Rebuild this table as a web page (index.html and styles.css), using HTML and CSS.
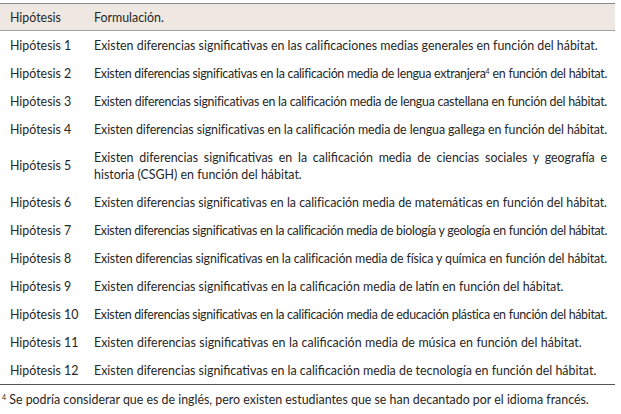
FILE: index.html
```
<!DOCTYPE html>
<html lang="es">
<head>
<meta charset="utf-8">
<link rel="stylesheet" href="styles.css">
</head>
<body>
<table class="hyp">
<colgroup><col class="k1"><col class="k2"></colgroup>
<thead>
<tr><th class="c1">Hipótesis</th><th class="c2">Formulación.</th></tr>
</thead>
<tbody>
<tr><td class="c1">Hipótesis 1</td><td class="c2">Existen diferencias significativas en las calificaciones medias generales en función del hábitat.</td></tr>
<tr><td class="c1">Hipótesis 2</td><td class="c2 fit s30">Existen diferencias significativas en la calificación media de lengua extranjera<sup>4</sup> en función del hábitat.</td></tr>
<tr><td class="c1">Hipótesis 3</td><td class="c2 fit s25">Existen diferencias significativas en la calificación media de lengua castellana en función del hábitat.</td></tr>
<tr><td class="c1">Hipótesis 4</td><td class="c2 fit s10">Existen diferencias significativas en la calificación media de lengua gallega en función del hábitat.</td></tr>
<tr class="two"><td class="c1">Hipótesis 5</td><td class="c2 just">Existen diferencias significativas en la calificación media de ciencias sociales y geografía e historia (CSGH) en función del hábitat.</td></tr>
<tr><td class="c1">Hipótesis 6</td><td class="c2 fit s02">Existen diferencias significativas en la calificación media de matemáticas en función del hábitat.</td></tr>
<tr><td class="c1">Hipótesis 7</td><td class="c2 fit s30">Existen diferencias significativas en la calificación media de biología y geología en función del hábitat.</td></tr>
<tr><td class="c1">Hipótesis 8</td><td class="c2 fit s15">Existen diferencias significativas en la calificación media de física y química en función del hábitat.</td></tr>
<tr><td class="c1">Hipótesis 9</td><td class="c2">Existen diferencias significativas en la calificación media de latín en función del hábitat.</td></tr>
<tr><td class="c1">Hipótesis 10</td><td class="c2 fit s30">Existen diferencias significativas en la calificación media de educación plástica en función del hábitat.</td></tr>
<tr><td class="c1">Hipótesis 11</td><td class="c2 w10">Existen diferencias significativas en la calificación media de música en función del hábitat.</td></tr>
<tr><td class="c1">Hipótesis 12</td><td class="c2">Existen diferencias significativas en la calificación media de tecnología en función del hábitat.</td></tr>
</tbody>
</table>
<p class="note"><sup>4</sup> Se podría considerar que es de inglés, pero existen estudiantes que se han decantado por el idioma francés.</p>
</body>
</html>
```
FILE: styles.css
```
html, body { margin: 0; padding: 0; background: #fff; }
body {
  padding-top: 3px;
  font-family: Lato, "Open Sans", sans-serif;
  font-size: 12.4px;
  color: #262626;
}
.hyp {
  width: 615px;
  table-layout: fixed;
  border-collapse: collapse;
  border-bottom: 1px solid #555;
}
.k1 { width: 94px; }
.hyp th {
  font-weight: normal;
  text-align: left;
  background: #efe7e1;
  height: 26px;
  padding: 0;
  border-top: 1px solid #8a8a8a;
  border-bottom: 1px solid #a0a0a0;
}
.hyp td {
  height: 28px;
  padding: 0;
  vertical-align: middle;
  white-space: nowrap;
}
.hyp .c1 { padding-left: 10px; }
.hyp .c2 { padding-right: 8px; }
.hyp tr.two td { height: 45px; }
.hyp td.just { white-space: normal; text-align: justify; line-height: 17px; }
.hyp td.fit { white-space: normal; text-align: justify; text-align-last: justify; }
.s30 { letter-spacing: -0.32px; }
.s25 { letter-spacing: -0.26px; }
.s15 { letter-spacing: -0.16px; }
.s10 { letter-spacing: -0.1px; }
.s02 { letter-spacing: -0.03px; }
.w10 { word-spacing: 0.35px; }
sup { font-size: 7px; vertical-align: 4px; line-height: 0; letter-spacing: 0; }
.note { margin: 7px 0 0 2px; }
```
